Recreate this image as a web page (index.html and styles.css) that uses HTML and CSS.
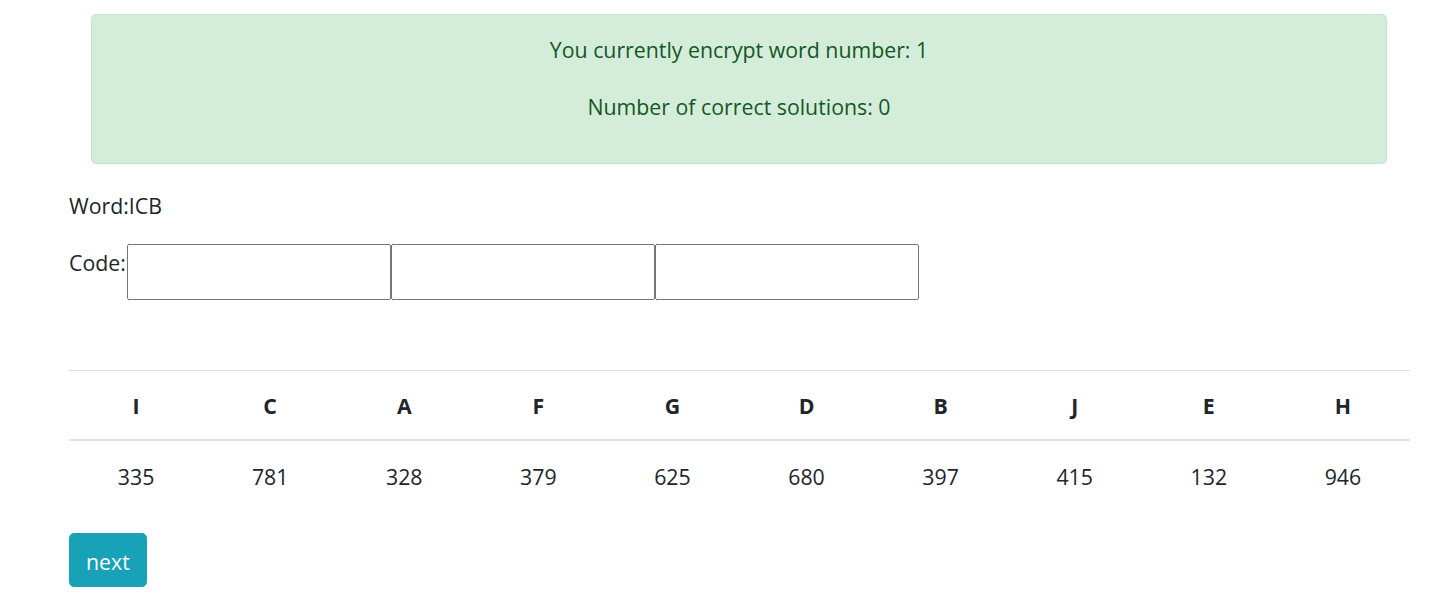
FILE: index.html
```html
<!DOCTYPE html>
<html lang="en">
<head>
<meta charset="utf-8">
<title>Encrypt</title>
<link rel="stylesheet" href="styles.css">
</head>
<body>
<div class="container">
  <div class="alert">
    <p>You currently encrypt word number: 1</p>
    <p>Number of correct solutions: 0</p>
  </div>
  <p class="word">Word:ICB</p>
  <div class="code-row">
    <span class="code-label">Code:</span>
    <input class="code-input" type="text">
    <input class="code-input" type="text">
    <input class="code-input" type="text">
  </div>
  <table class="table">
    <thead>
      <tr><th>I</th><th>C</th><th>A</th><th>F</th><th>G</th><th>D</th><th>B</th><th>J</th><th>E</th><th>H</th></tr>
    </thead>
    <tbody>
      <tr><td>335</td><td>781</td><td>328</td><td>379</td><td>625</td><td>680</td><td>397</td><td>415</td><td>132</td><td>946</td></tr>
    </tbody>
  </table>
  <button class="btn-next" type="button">next</button>
</div>
</body>
</html>
```
FILE: styles.css
```css
* { box-sizing: border-box; }
html, body { margin: 0; padding: 0; background: #fff; }
body {
  font-family: "Open Sans", "Noto Sans", "Liberation Sans", sans-serif;
  font-size: 21.3px;
  line-height: 30px;
  color: #212529;
}
.container {
  padding: 14px 31px 0 69px;
}
.alert {
  margin: 0 23px 0 22px;
  padding: 20px 20px 14px;
  background: #d4edda;
  border: 1px solid #c3e6cb;
  border-radius: 5px;
  color: #155724;
  text-align: center;
}
.alert p { margin: 0 0 27px; }
.word { margin: 27px 0 23px; }
.code-row {
  display: flex;
  align-items: flex-start;
}
.code-label { padding: 4px 1px 0 0; }
.code-input {
  width: 264px;
  height: 56px;
  margin: 0;
  border: 1px solid #767676;
  border-radius: 2px;
  background: #fff;
  font: inherit;
  padding: 0 4px;
}
.table {
  width: 100%;
  margin-top: 70px;
  border-collapse: collapse;
}
.table th, .table td {
  text-align: center;
  padding: 20px 15px;
  border-top: 1px solid #dee2e6;
  width: 10%;
}
.table th {
  font-weight: 700;
  padding-bottom: 18px;
  border-bottom: 2px solid #dee2e6;
}
.table td { padding-top: 21px; }
.btn-next {
  margin-top: 21px;
  padding: 3px 16px 0;
  height: 54px;
  background: #17a2b8;
  border: 1px solid #17a2b8;
  border-radius: 5px;
  color: #fff;
  font: inherit;
  line-height: 30px;
  cursor: pointer;
}
```
